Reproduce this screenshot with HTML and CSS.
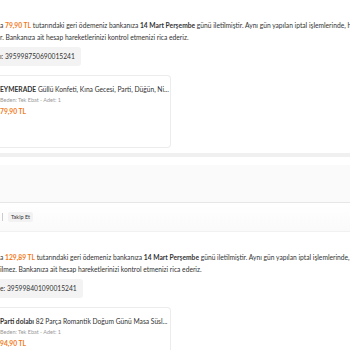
FILE: index.html
```html
<!DOCTYPE html>
<html lang="tr">
<head>
<meta charset="utf-8">
<link rel="stylesheet" href="styles.css">
</head>
<body>
<div class="page">
  <section class="refund">
    <div class="msg">
      <span class="line">a <span class="price">79,90 TL</span> tutarındaki geri ödemeniz bankanıza <b>14 Mart Perşembe</b> günü iletilmiştir. Aynı gün yapılan iptal işlemlerinde, harcama</span>
      <span class="line">r. Bankanıza ait hesap hareketlerinizi kontrol etmenizi rica ederiz.</span>
    </div>
    <div class="ref">ı: 395998750690015241</div>
    <div class="card">
      <div class="title"><b>EYMERADE</b> Güllü Konfeti, Kına Gecesi, Parti, Düğün, Ni...</div>
      <div class="sub">Beden: Tek Ebat - Adet: 1</div>
      <div class="price amount">79,90 TL</div>
    </div>
  </section>
  <div class="divider"></div>
  <div class="panel"></div>
  <div class="actions">
    <span class="sep"></span>
    <span class="btn">Takip Et</span>
  </div>
  <section class="refund">
    <div class="msg">
      <span class="line">a <span class="price">129,89 TL</span> tutarındaki geri ödemeniz bankanıza <b>14 Mart Perşembe</b> günü iletilmiştir. Aynı gün yapılan iptal işlemlerinde, harcama</span>
      <span class="line">ilmez. Bankanıza ait hesap hareketlerinizi kontrol etmenizi rica ederiz.</span>
    </div>
    <div class="ref">e: 395998401090015241</div>
    <div class="card">
      <div class="title"><b>Parti dolabı</b> 82 Parça Romantik Doğum Günü Masa Süsl...</div>
      <div class="sub">Beden: Tek Ebat - Adet: 1</div>
      <div class="price amount">94,90 TL</div>
    </div>
  </section>
  <div class="bottom-bar"></div>
</div>
</body>
</html>
```
FILE: styles.css
```css
html, body {
  margin: 0;
  padding: 0;
  background: #fff;
}
.page {
  width: 350px;
  height: 350px;
  overflow: hidden;
  font-family: Lato, "Open Sans", sans-serif;
  font-size: 6.7px;
  color: #333;
  display: flex;
  flex-direction: column;
}
.refund {
  display: flex;
  flex-direction: column;
  flex-shrink: 0;
  padding-top: 19px;
}
.msg {
  display: flex;
  flex-direction: column;
}
.line {
  display: block;
  white-space: nowrap;
  line-height: 12px;
}
.price {
  color: #f27a1a;
  font-weight: 700;
}
b {
  font-weight: 700;
}
.ref {
  align-self: flex-start;
  margin-top: 4px;
  background: #f3f3f3;
  border-radius: 0 3px 3px 0;
  height: 19px;
  line-height: 19px;
  padding: 0 6px 0 0;
  white-space: nowrap;
}
.card {
  margin-top: 9px;
  width: 171px;
  height: 73px;
  box-sizing: border-box;
  border: 1px solid #ececec;
  border-left: 0;
  border-radius: 0 4px 4px 0;
  padding-top: 8px;
  display: flex;
  flex-direction: column;
  flex-shrink: 0;
}
.title {
  white-space: nowrap;
  line-height: 11px;
}
.sub {
  font-size: 5.5px;
  color: #9a9a9a;
  line-height: 10px;
}
.amount {
  line-height: 12px;
}
.divider {
  margin-top: 5px;
  height: 4px;
  background: #f0f0f0;
  flex-shrink: 0;
}
.panel {
  margin-top: 8px;
  height: 37px;
  background: #fafafa;
  border-bottom: 1px solid #e6e6e6;
  flex-shrink: 0;
}
.actions {
  height: 28px;
  display: flex;
  align-items: center;
  gap: 5px;
  background: linear-gradient(#fff, #fafafa);
  border-bottom: 1px solid #f1f1f1;
  flex-shrink: 0;
}
.sep {
  width: 1px;
  height: 8px;
  background: #ccc;
  margin-left: 2px;
}
.btn {
  font-size: 5.5px;
  background: #f2f2f2;
  border-radius: 2px;
  padding: 2px 3px;
  color: #333;
}
.bottom-bar {
  margin-top: auto;
  height: 3px;
  background: #222;
  flex-shrink: 0;
}
```
